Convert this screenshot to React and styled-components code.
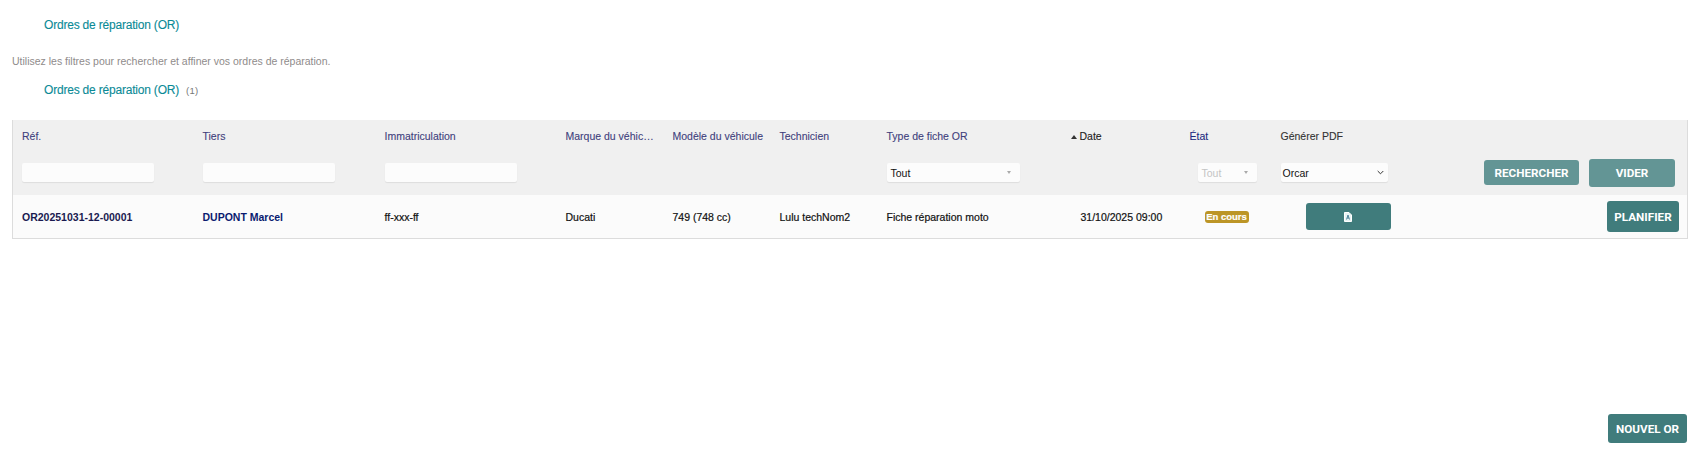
import React from "react";
import styled, { createGlobalStyle } from "styled-components";

const Global = createGlobalStyle`
  html, body { margin: 0; padding: 0; background: #fff; }
  body { font-family: "Liberation Sans", Arial, sans-serif; font-size: 10.5px; color: #000; }
`;
const Page = styled.div`
  height: 468px; display: flex; flex-direction: column; padding: 0 12px; box-sizing: border-box; overflow: hidden;
`;
const Title = styled.h1`
  margin: 0; padding-left: 32px; font-size: 12px; line-height: 16px; font-weight: 400; color: #0a8a96;
  letter-spacing: -0.2px; display: flex; align-items: baseline; gap: 7px; -webkit-text-stroke: 0.1px;
`;
const TopTitle = styled(Title)` margin-top: 17px; `;
const Hint = styled.p` margin: 21px 0 0; font-size: 10.5px; line-height: 14px; color: #8f8b8b; `;
const SecondTitle = styled(Title)` margin-top: 14px; `;
const Count = styled.span` font-size: 9.5px; color: #777; letter-spacing: 0.3px; -webkit-text-stroke: 0; `;
const Table = styled.table`
  margin-top: 21px; width: 1675px; table-layout: fixed; border-collapse: collapse; border: 1px solid #dcdcdc; border-top: 0;
`;
const Col = styled.col` width: ${p => p.$w}px; `;
const HeadRow = styled.tr` background: #f0f0f0; height: 32px; `;
const FilterRow = styled.tr` background: #f0f0f0; height: 43px; `;
const DataRow = styled.tr` background: #fbfbfb; height: 43px; `;
const Th = styled.th`
  padding: 0 ${p => p.$pr ?? 9}px 0 ${p => p.$pl ?? 9}px; text-align: left; font-weight: 400; font-size: 10.5px; white-space: nowrap;
  overflow: hidden; text-overflow: ellipsis; color: ${p => p.$color || "#40407c"}; -webkit-text-stroke: 0.1px;
`;
const FilterCell = styled.td` padding: 0 ${p => p.$pr ?? 9}px 2px ${p => p.$pl ?? 9}px; vertical-align: middle; `;
const Td = styled.td`
  padding: 1px ${p => p.$pr ?? 9}px 0 ${p => p.$pl ?? 9}px; font-size: 10.5px; font-weight: ${p => (p.$strong ? 700 : 400)}; white-space: nowrap;
  color: ${p => p.$color || "#111"}; -webkit-text-stroke: ${p => (p.$strong ? 0 : "0.2px")};
`;
const FilterInput = styled.input`
  display: block; box-sizing: border-box; width: 132px; height: 19px; border: 0; border-radius: 2px; background: #fcfcfc;
  box-shadow: 0 1px 1px rgba(0,0,0,0.08); padding: 0 4px;
`;
const FakeSelect = styled.div`
  display: flex; align-items: center; justify-content: space-between; box-sizing: border-box; height: 19px; border-radius: 2px;
  width: ${p => p.$w}px; background: #fcfcfc; box-shadow: 0 1px 1px rgba(0,0,0,0.08); padding: 0 ${p => p.$pr ?? 9}px 0 ${p => p.$pl ?? 4}px;
  font-size: 10.5px; color: ${p => (p.$muted ? "#c4c4c4" : "#111")};
`;
const Caret = styled.span`
  width: 0; height: 0; border-left: 2.5px solid transparent; border-right: 2.5px solid transparent; border-top: 3px solid #aaa;
`;
const Split = styled.div` display: flex; justify-content: space-between; align-items: center; padding-left: ${p => p.$pl ?? 0}px; `;
const Actions = styled.div` display: flex; align-items: center; gap: 10px; padding-right: 1px; `;
const Button = styled.button`
  border: 0; border-radius: 3px; color: #fff; background: ${p => (p.$off ? "#639595" : "#407c7c")};
  font: 700 11.7px "Roboto", sans-serif; padding: 0; text-transform: uppercase;
  width: ${p => p.$w}px; height: ${p => p.$h}px; display: flex; align-items: center; justify-content: center;
`;
const Badge = styled.span`
  display: block; width: 44px; text-align: center; background: #bc9526; color: #fff; font: 700 9.5px/12px "Liberation Sans", sans-serif; border-radius: 3px;
`;
const Footer = styled.div` position: absolute; top: 414px; right: 20px; `;
const SortArrow = styled.span`
  display: inline-block; width: 0; height: 0; border-left: 3.5px solid transparent; border-right: 3.5px solid transparent; border-bottom: 4px solid #333; margin-right: 3px; vertical-align: 1px;
`;
const RightCell = styled.td` padding: 1px 8px 0 0; `;

const widths = [181, 182, 181, 107, 107, 107, 184, 118, 92, 416];

const PdfIcon = () => (
  <svg width="8" height="10" viewBox="0 0 8 10" fill="none">
    <path d="M.5.5h4.5L7.5 3v6.5h-7z" fill="#e8f4f4" stroke="#fff" />
    <path d="M4 3 2.5 7.5M4 3l1.5 4.5M3 6h2" stroke="#35708c" strokeWidth=".8" />
  </svg>
);

const Chevron = () => (
  <svg width="7" height="5" viewBox="0 0 7 5" fill="none">
    <path d="M.7 1 3.5 3.8 6.3 1" stroke="#333" strokeWidth="1" />
  </svg>
);

export default function App() {
  return (
    <Page>
      <Global />
      <TopTitle>Ordres de réparation (OR)</TopTitle>
      <Hint>Utilisez les filtres pour rechercher et affiner vos ordres de réparation.</Hint>
      <SecondTitle>Ordres de réparation (OR) <Count>(1)</Count></SecondTitle>
      <Table>
        <colgroup>{widths.map((w, i) => <Col key={i} $w={w} />)}</colgroup>
        <thead>
          <HeadRow>
            <Th>Réf.</Th><Th>Tiers</Th><Th>Immatriculation</Th><Th>Marque du véhicule</Th><Th $pr={0}>Modèle du véhicule</Th>
            <Th>Technicien</Th><Th>Type de fiche OR</Th>
            <Th $color="#222" $pl={9}><SortArrow />Date</Th>
            <Th $color="#1b2a80" $pl={10}>État</Th><Th $color="#333">Générer PDF</Th>
          </HeadRow>
          <FilterRow>
            <FilterCell><FilterInput /></FilterCell>
            <FilterCell><FilterInput /></FilterCell>
            <FilterCell><FilterInput /></FilterCell>
            <FilterCell /><FilterCell /><FilterCell />
            <FilterCell><FakeSelect $w={133}>Tout<Caret /></FakeSelect></FilterCell>
            <FilterCell />
            <FilterCell $pl={18}><FakeSelect $w={59} $muted>Tout<Caret /></FakeSelect></FilterCell>
            <FilterCell $pr={11}>
              <Split>
                <FakeSelect $w={107} $pl={2} $pr={4}>Orcar<Chevron /></FakeSelect>
                <Actions><Button $off $w={95} $h={25}>Rechercher</Button><Button $off $w={86} $h={28}>Vider</Button></Actions>
              </Split>
            </FilterCell>
          </FilterRow>
        </thead>
        <tbody>
          <DataRow>
            <Td $strong $color="#1a1a50">OR20251031-12-00001</Td>
            <Td $strong $color="#0a1a70">DUPONT Marcel</Td>
            <Td>ff-xxx-ff</Td><Td>Ducati</Td><Td>749 (748 cc)</Td><Td>Lulu techNom2</Td><Td>Fiche réparation moto</Td>
            <Td $pl={19}>31/10/2025 09:00</Td>
            <Td $pl={25}><Badge>En cours</Badge></Td>
            <RightCell>
              <Split $pl={34}>
                <Button $w={85} $h={27}><PdfIcon /></Button>
                <Button $w={72} $h={31}>Planifier</Button>
              </Split>
            </RightCell>
          </DataRow>
        </tbody>
      </Table>
      <Footer><Button $w={79} $h={29}>Nouvel OR</Button></Footer>
    </Page>
  );
}
